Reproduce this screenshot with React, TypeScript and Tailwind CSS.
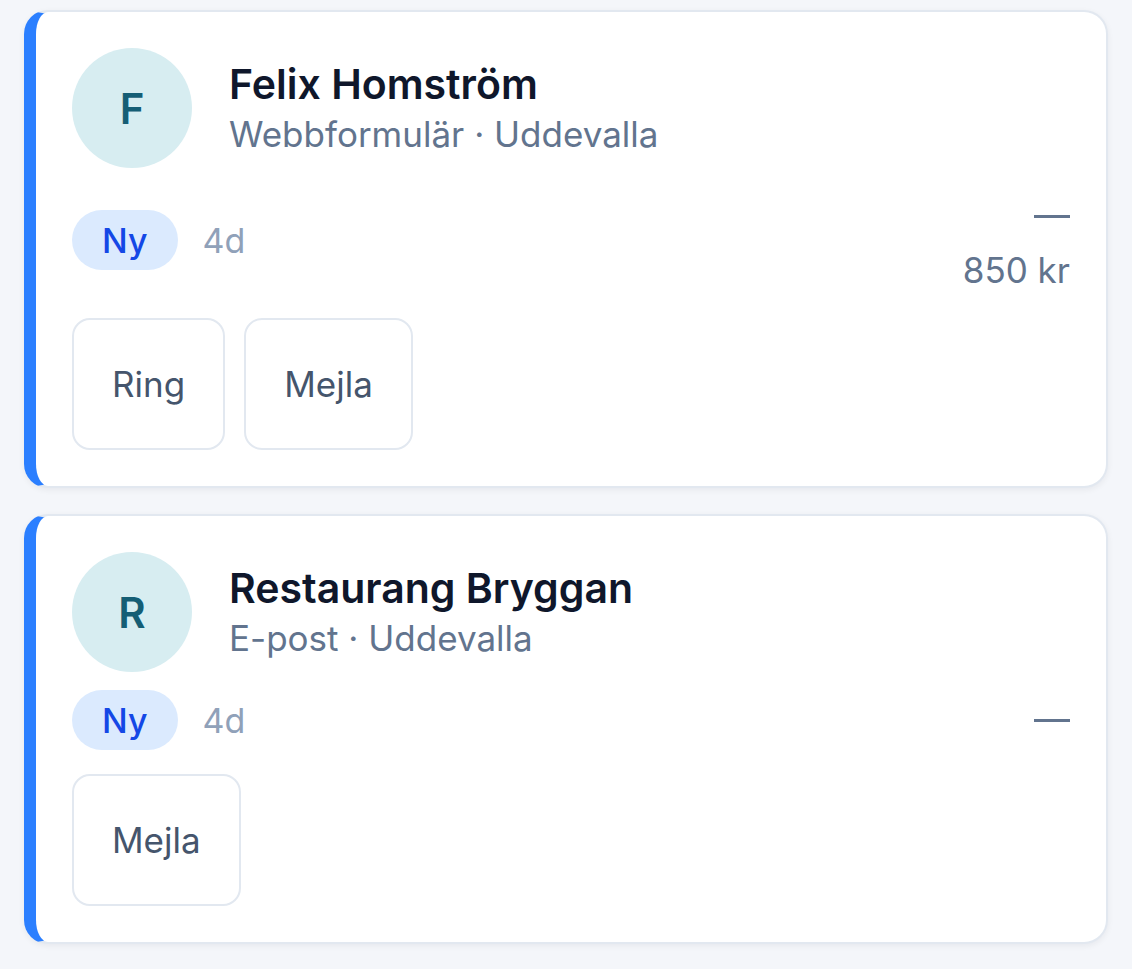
const leads = [
  {
    initial: "F",
    name: "Felix Homström",
    source: "Webbformulär",
    city: "Uddevalla",
    age: "4d",
    value: "850 kr",
    actions: ["Ring", "Mejla"],
  },
  {
    initial: "R",
    name: "Restaurang Bryggan",
    source: "E-post",
    city: "Uddevalla",
    age: "4d",
    value: null as string | null,
    actions: ["Mejla"],
  },
];

function LeadCard({ lead }: { lead: (typeof leads)[number] }) {
  return (
    <div className="bg-white rounded-[24px] border-2 border-slate-200 border-l-[12px] border-l-blue-500 shadow-[0_2px_6px_rgba(15,23,42,0.06)] p-[36px]">
      <div className="flex items-center gap-[37px]">
        <div className="w-[120px] h-[120px] rounded-full bg-[#d7edf1] flex items-center justify-center text-[#155e75] text-[42px] font-semibold">
          {lead.initial}
        </div>
        <div className="flex flex-col">
          <div className="text-[41px] leading-[50px] font-semibold text-slate-900 pt-[2px]">{lead.name}</div>
          <div className="text-[35px] leading-[50px] text-slate-500">
            {lead.source} · {lead.city}
          </div>
        </div>
      </div>

      <div className="mt-[18px] flex items-center justify-between">
        <div className="flex items-center gap-[25px]">
          <span className="h-[60px] px-[30px] rounded-full bg-blue-100 text-blue-700 text-[34px] font-medium flex items-center">
            Ny
          </span>
          <span className="text-[34px] text-slate-400">{lead.age}</span>
        </div>
        <div className="flex flex-col items-end text-slate-500">
          <span className="h-[60px] flex items-center">
            <span className="block w-[36px] h-[3px] bg-slate-500" />
          </span>
          {lead.value && <span className="text-[35px] leading-[48px]">{lead.value}</span>}
        </div>
      </div>

      <div className="mt-[24px] flex gap-[19px]">
        {lead.actions.map((a) => (
          <button
            key={a}
            className="h-[132px] px-[38px] rounded-[18px] border-2 border-slate-200 bg-white text-slate-600 text-[35px]"
          >
            {a}
          </button>
        ))}
      </div>
    </div>
  );
}

export default function App() {
  return (
    <div
      className="min-h-screen bg-[#f4f6fa] px-[24px] pt-[10px] pb-[26px] flex flex-col gap-[26px] w-[1132px]"
      style={{ fontFamily: "Inter, 'Noto Sans', sans-serif" }}
    >
      {leads.map((l) => (
        <LeadCard key={l.name} lead={l} />
      ))}
    </div>
  );
}
